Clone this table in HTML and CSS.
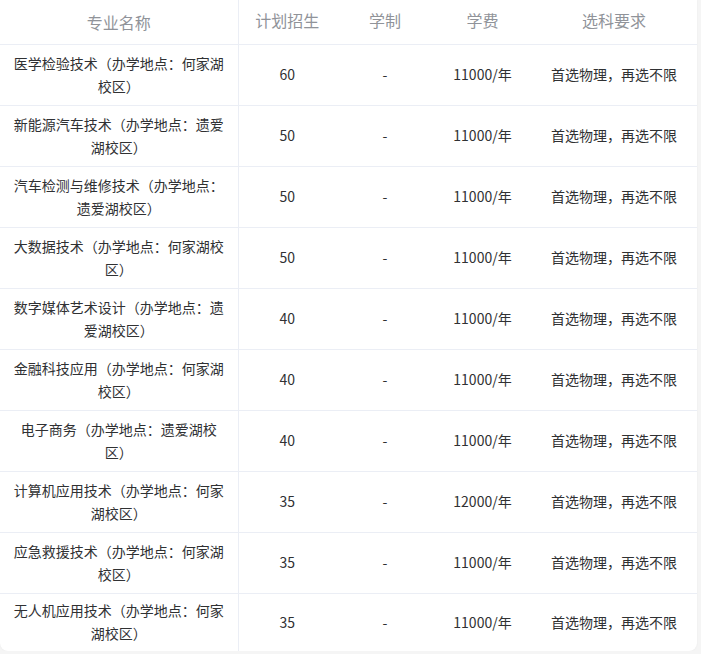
FILE: index.html
```html
<!DOCTYPE html>
<html lang="zh-CN">
<head>
<meta charset="utf-8">
<link rel="stylesheet" href="styles.css">
</head>
<body>
<div class="card">
<table class="plan">
<colgroup>
<col class="c-name"><col class="c-num"><col class="c-len"><col class="c-fee"><col class="c-req">
</colgroup>
<thead>
<tr><th class="name">专业名称</th><th>计划招生</th><th>学制</th><th>学费</th><th>选科要求</th></tr>
</thead>
<tbody>
<tr><td class="name">医学检验技术（办学地点：何家湖校区）</td><td>60</td><td>-</td><td>11000/年</td><td>首选物理，再选不限</td></tr>
<tr><td class="name">新能源汽车技术（办学地点：遗爱湖校区）</td><td>50</td><td>-</td><td>11000/年</td><td>首选物理，再选不限</td></tr>
<tr><td class="name">汽车检测与维修技术（办学地点：遗爱湖校区）</td><td>50</td><td>-</td><td>11000/年</td><td>首选物理，再选不限</td></tr>
<tr><td class="name">大数据技术（办学地点：何家湖校区）</td><td>50</td><td>-</td><td>11000/年</td><td>首选物理，再选不限</td></tr>
<tr><td class="name">数字媒体艺术设计（办学地点：遗爱湖校区）</td><td>40</td><td>-</td><td>11000/年</td><td>首选物理，再选不限</td></tr>
<tr><td class="name">金融科技应用（办学地点：何家湖校区）</td><td>40</td><td>-</td><td>11000/年</td><td>首选物理，再选不限</td></tr>
<tr><td class="name">电子商务（办学地点：遗爱湖校区）</td><td>40</td><td>-</td><td>11000/年</td><td>首选物理，再选不限</td></tr>
<tr><td class="name">计算机应用技术（办学地点：何家湖校区）</td><td>35</td><td>-</td><td>12000/年</td><td>首选物理，再选不限</td></tr>
<tr><td class="name">应急救援技术（办学地点：何家湖校区）</td><td>35</td><td>-</td><td>11000/年</td><td>首选物理，再选不限</td></tr>
<tr class="last"><td class="name">无人机应用技术（办学地点：何家湖校区）</td><td>35</td><td>-</td><td>11000/年</td><td>首选物理，再选不限</td></tr>
</tbody>
</table>
</div>
</body>
</html>
```
FILE: styles.css
```css
html, body {
  margin: 0;
  padding: 0;
  background: #f5f5f5;
}
body {
  font-family: "Noto Sans CJK SC", "Noto Sans", sans-serif;
  color: #303133;
}
.card {
  width: 697px;
  background: #fff;
  border-radius: 0 0 8px 8px;
  box-shadow: 0 0 2px rgba(0,0,0,0.06);
  overflow: hidden;
}
.plan {
  width: 697px;
  border-collapse: collapse;
  table-layout: fixed;
}
.c-name { width: 238px; }
.c-num { width: 98px; }
.c-len { width: 98px; }
.c-fee { width: 97px; }
.c-req { width: 166px; }
.plan th {
  height: 44px;
  padding: 0 0 4px;
  box-sizing: border-box;
  font-size: 16px;
  font-weight: normal;
  color: #909399;
  text-align: center;
  border-bottom: 1px solid #ebeef5;
}
.plan td {
  height: 61px;
  box-sizing: border-box;
  padding: 0;
  font-size: 14px;
  line-height: 23px;
  text-align: center;
  border-bottom: 1px solid #ebeef5;
}
.plan tr.last td {
  border-bottom: none;
  height: 58px;
}
.plan .name {
  border-right: 1px solid #ebeef5;
  padding: 0 12px;
}
```
